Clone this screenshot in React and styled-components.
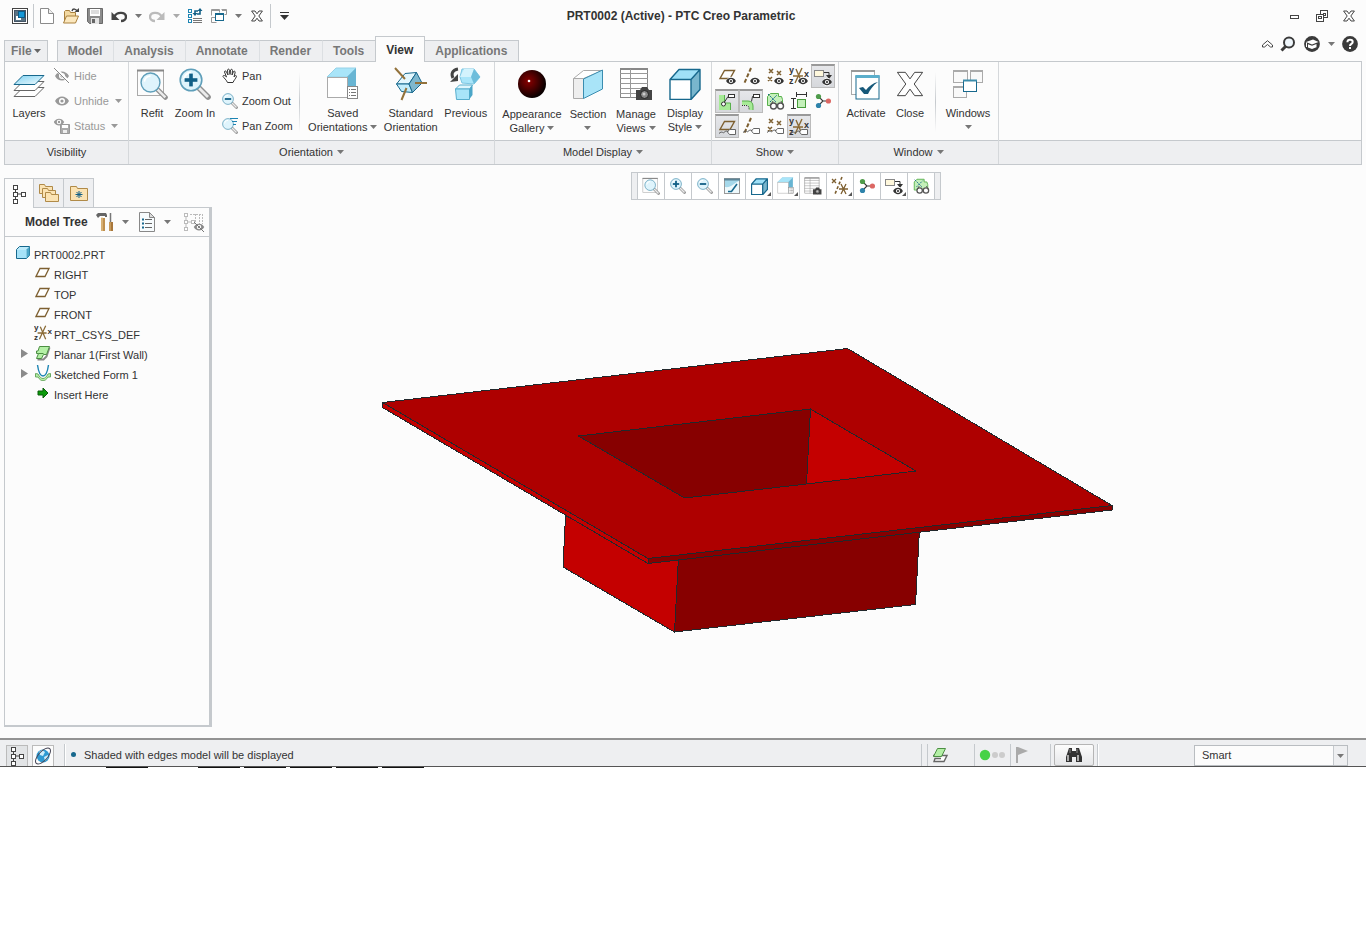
import React from "react";
import styled, { createGlobalStyle, css } from "styled-components";

/* ---------- icons ---------- */

const Svg = ({ w = 16, h, box, children }) => (
  <svg
    width={w}
    height={h || w}
    viewBox={box || `0 0 ${w} ${h || w}`}
    fill="none"
    aria-hidden="true"
  >
    {children}
  </svg>
);

const Caret = ({ color = "#777" }) => (
  <Svg w={7} h={4}>
    <path d="M0 0h7L3.5 4z" fill={color} />
  </Svg>
);

const AppIcon = () => (
  <Svg>
    <rect x=".5" y=".5" width="15" height="15" fill="#fff" stroke="#444" />
    <rect x="2.5" y="2.5" width="11" height="11" fill="#5b7384" stroke="#456" />
    <rect x="4" y="8" width="5" height="4" fill="#fff" />
    <rect x="6.5" y="3.5" width="6" height="6" fill="#1597d6" stroke="#0d5c88" />
  </Svg>
);

const NewIcon = () => (
  <Svg>
    <path d="M1.5.5h8l5 5v10h-13z" fill="#fff" stroke="#8b8b8b" />
    <path d="M9.5.5v5h5" fill="#eee" stroke="#8b8b8b" />
  </Svg>
);

const OpenIcon = () => (
  <Svg>
    <path d="M1.5 14.5v-11l1-1h4l1 2h5v4" fill="#f3d9a2" stroke="#a9803d" />
    <path d="M.5 15l3-7h12l-3 7z" fill="#fbe7bd" stroke="#a9803d" />
    <path d="M9 3c1-3 4-2 5 0" stroke="#444" strokeWidth="1.5" />
    <path d="M11.5 4H16V0z" fill="#444" />
  </Svg>
);

const SaveIcon = () => (
  <Svg>
    <path d="M.5.5h15v15h-13l-2-2z" fill="#8b8b8b" stroke="#696969" />
    <rect x="3" y="1" width="10" height="7" fill="#fff" />
    <path d="M4 3h8M4 5h8" stroke="#bbb" />
    <rect x="4" y="10" width="8" height="6" fill="#e4e4e4" />
    <rect x="5" y="11" width="3" height="4" fill="#666" />
  </Svg>
);

const CurvedArrow = ({ color }) => (
  <>
    <path d="M3 9c3-6 12-5 12 0 0 2-2 4-5 4" stroke={color} strokeWidth="2.4" />
    <path d="M.5 4v8h8z" fill={color} />
  </>
);

const UndoIcon = () => (
  <Svg>
    <CurvedArrow color="#444" />
  </Svg>
);

const RedoIcon = () => (
  <Svg>
    <g transform="matrix(-1 0 0 1 16 0)">
      <CurvedArrow color="#bbb" />
    </g>
  </Svg>
);

const RegenIcon = () => (
  <Svg>
    <rect x="1.5" y="1.5" width="3" height="3" stroke="#1c84b3" />
    <rect x="1.5" y="6.5" width="3" height="3" stroke="#1c84b3" />
    <rect x="1.5" y="11.5" width="3" height="3" stroke="#1c84b3" />
    <path d="M6 10.5h9M6 12.5h9M6 14.5h9" stroke="#777" />
    <path d="M8 6V3h3M13 2v4h-3" stroke="#115f86" strokeWidth="1.6" />
    <path d="M5.5 5h5L8 8zM10.5 3h5L13 0z" fill="#115f86" />
  </Svg>
);

const TilesIcon = () => (
  <Svg>
    <path d="M.5 7.5v-6h8v3M10.5 1.5h5v5h-2M.5 9.5v5h5M.5 9.5h4" stroke="#999" />
    <path d="M1 2h7M11 2h4" stroke="#999" strokeWidth="2" />
    <rect x="4.5" y="5.5" width="8" height="7" fill="#fff" stroke="#17688d" />
    <path d="M4 6h9" stroke="#17688d" strokeWidth="2" />
  </Svg>
);

const CrossIcon = ({ size = 12 }) => (
  <Svg w={size} box="0 0 12 12">
    <path
      d="M.6 1h3.400L6 3.800 8 1h3.400L7.800 6l3.600 5H8L6 8.200 4 11H.6L4.200 6z"
      fill="#fff"
      stroke="#444"
      vectorEffect="non-scaling-stroke"
    />
  </Svg>
);

const MenuCaret = () => (
  <Svg w={9} h={8}>
    <path d="M0 .5h9" stroke="#333" />
    <path d="M0 3h9L4.5 8z" fill="#333" />
  </Svg>
);

const MinimizeIcon = () => (
  <Svg w={10} h={6}>
    <rect x=".5" y="2.5" width="8" height="3" fill="#fff" stroke="#444" />
  </Svg>
);

const RestoreIcon = () => (
  <Svg w={12}>
    <rect x="4.5" y=".5" width="7" height="7" fill="#fff" stroke="#444" />
    <rect x="7.5" y="3.5" width="2" height="2" stroke="#444" />
    <rect x=".5" y="4.5" width="7" height="7" fill="#fff" stroke="#444" />
    <rect x="2.5" y="6.5" width="3" height="2" stroke="#444" />
  </Svg>
);

const CollapseIcon = () => (
  <Svg w={11} h={8}>
    <path
      d="M5.5.7l5 4.300v2h-2l-3-2.500-3 2.500h-2V5z"
      fill="#fff"
      stroke="#444"
    />
  </Svg>
);

const SearchIcon = () => (
  <Svg>
    <circle cx="9" cy="6.5" r="5" fill="#eff6fb" stroke="#3a3a3a" strokeWidth="2" />
    <path d="M6 10l-4.500 4.500" stroke="#3a3a3a" strokeWidth="3" />
  </Svg>
);

const LearnIcon = () => (
  <Svg>
    <circle cx="8" cy="8" r="7.900" fill="#3a3a3a" />
    <path d="M2 6l7-2.500L14.500 6 8 8.500z" fill="#fff" />
    <path d="M4 8.200l4 1.600 4.500-1.800v3.200L8 13l-4-1.600z" fill="#fff" />
    <path d="M2.500 6.500V11" stroke="#fff" />
  </Svg>
);

const HelpIcon = () => (
  <Svg>
    <circle cx="8" cy="8" r="7.900" fill="#3a3a3a" />
    <path
      d="M5.400 6.300c0-3.400 5.300-3.100 5.300-.3C10.700 8 8 7.800 8 10"
      stroke="#fff"
      strokeWidth="2"
    />
    <rect x="7" y="11" width="2" height="2" fill="#fff" />
  </Svg>
);

const LayersIcon = () => (
  <Svg w={32}>
    <defs>
      <linearGradient id="sheet" x1="0" x2="1" y1="0" y2="1">
        <stop offset="0" stopColor="#7fd2f2" />
        <stop offset="1" stopColor="#f2fbfe" />
      </linearGradient>
    </defs>
    <path d="M10 19.500h21l-9 9H1z" fill="#fff" stroke="#666" />
    <path d="M10 13.500h21l-9 9H1z" fill="#fff" stroke="#666" />
    <path d="M10 7.500h21l-9 9H1z" fill="url(#sheet)" stroke="#17688d" />
  </Svg>
);

const Eye = ({ color = "#333" }) => (
  <>
    <path d="M-7 0c3-6 11-6 14 0-3 6-11 6-14 0z" fill={color} />
    <circle r="3" fill="#fff" />
    <circle r="1.600" fill={color} />
  </>
);

const HideIcon = () => (
  <Svg>
    <g transform="translate(8 8)">
      <Eye color="#999" />
    </g>
    <path d="M1 0l15 15" stroke="#fff" strokeWidth="3" />
    <path d="M0 0l15 15" stroke="#888" />
  </Svg>
);

const UnhideIcon = () => (
  <Svg>
    <g transform="translate(8 8)">
      <Eye color="#999" />
    </g>
  </Svg>
);

const StatusIcon = () => (
  <Svg>
    <g transform="translate(5 4) scale(.75)">
      <Eye color="#999" />
    </g>
    <path d="M6.500 6.500h9v9h-9z" fill="#aaa" stroke="#999" />
    <rect x="8" y="7" width="6" height="3" fill="#fff" />
    <rect x="9" y="12" width="4" height="3" fill="#eee" />
  </Svg>
);

// lens and handle on a 16 unit grid, shared by every zoom command
const Lens = ({ sign }) => (
  <>
    <path d="M10 10l4.500 4.500" stroke="#909090" strokeWidth="2.800" strokeLinecap="round" />
    <path d="M10 10l4.500 4.500" stroke="#ececec" strokeWidth="1.400" />
    <circle cx="6" cy="6" r="5.400" fill="#dff4fc" stroke="#5f9fba" strokeWidth=".8" />
    <path d="M2.500 5.500A3.500 3.500 0 0 1 6 2.300" stroke="#fff" />
    {sign && <path d="M2.800 6h6.400" stroke="#115f86" strokeWidth="1.800" />}
    {sign === "+" && <path d="M6 2.800v6.400" stroke="#115f86" strokeWidth="1.800" />}
  </>
);

const RefitIcon = ({ size = 32 }) => (
  <Svg w={size} box="0 0 32 32">
    <rect x="1.500" y="2.500" width="26" height="25" fill="#fcfcfc" stroke="#aaa" />
    <path d="M1 2.500h27" stroke="#888" strokeWidth="2" />
    <g transform="translate(4 4) scale(1.750)">
      <Lens />
    </g>
  </Svg>
);

const ZoomIcon = ({ size = 16, sign }) => (
  <Svg w={size} box="0 0 16 16">
    <Lens sign={sign} />
  </Svg>
);

const PanZoomIcon = () => (
  <Svg>
    <Lens />
    <path d="M8 .5h8M10 3.500h5M11 6.500h3" stroke="#1c84b3" />
  </Svg>
);

const HandIcon = () => (
  <Svg>
    <path
      d="M5.500 14.500C4.500 12 2 10 1 8.500 1 7 2.500 7 4.500 9l-2-5c0-1.500 1.500-1.500 2 0L6 7l-.5-5c.5-1.500 2-1 2 .5l.5 4L8.500 2c.5-1 2-1 2 .5L10 7l1.500-3.500c1-1 2 0 1.500 1.500l-1 4c1-1.500 2.500-2 2.500-.5C13.500 11 12 12 11 14.500z"
      fill="#fff"
      stroke="#333"
    />
  </Svg>
);

const ListPage = ({ x, y }) => (
  <g transform={`translate(${x} ${y})`}>
    <rect x=".5" y=".5" width="10" height="12" fill="#fff" stroke="#888" />
    <path d="M2 3.500h1M2 6.500h1M2 9.500h1M4 3.500h5M4 6.500h5M4 9.500h5" stroke="#777" />
  </g>
);

const SavedViewIcon = ({ size = 34 }) => (
  <Svg w={size} box="0 0 34 34">
    <path d="M1 10l9-9h20l-9 9z" fill="#a9e5f9" stroke="#96d2e8" />
    <path d="M21 10l9-9v20l-9 9z" fill="#68b5d3" />
    <rect x="1.500" y="10.500" width="20" height="20" fill="#fff" stroke="#aaa" />
    <ListPage x={21} y={19} />
  </Svg>
);

const StandardViewIcon = () => (
  <Svg w={34}>
    <g stroke="#17688d" strokeLinejoin="round">
      <path d="M11 6.500l11.500-1L15 17H2.500z" fill="#e4f7fd" />
      <path d="M2.500 17H15l3.500 8.500-11-1z" fill="#c2edfb" />
      <path d="M22.500 5.500L28 16l-9.500 9.500L15 17z" fill="#7fb8ce" />
    </g>
    <path d="M1 1l10 11M21 16h12M12.500 21l-5 12" stroke="#93723b" strokeWidth="2" />
  </Svg>
);

const PreviousIcon = () => (
  <Svg w={34}>
    <path d="M13 2h12l6 8-6 7-12-1-2-6z" fill="#a9e5f9" stroke="#7cc6e2" />
    <path d="M15 2h10l-3 8H11z" fill="#d3f3fd" />
    <path d="M25 2l6 8-6 7-3-7z" fill="#6dbddb" />
    <path d="M6.500 22l4-4h13l-3 4z" fill="#dff6fd" stroke="#58aecd" />
    <path d="M6.500 22h14v10.500h-13z" fill="#a9e5f9" stroke="#58aecd" />
    <path d="M20.500 22l3-4v10l-3 4z" fill="#4ba6c8" />
    <path d="M9 2C3 3 2 7 4 11" stroke="#444" strokeWidth="3" />
    <path d="M1 15l8-1V7z" fill="#444" />
  </Svg>
);

const SphereIcon = () => (
  <Svg w={30}>
    <defs>
      <radialGradient id="sphere" cx="38%" cy="40%" r="60%">
        <stop offset="0" stopColor="#8a0000" />
        <stop offset=".45" stopColor="#520000" />
        <stop offset="1" stopColor="#0a0000" />
      </radialGradient>
    </defs>
    <circle cx="15" cy="15" r="14" fill="url(#sphere)" />
    <circle cx="12" cy="12" r="1.300" fill="#fff" />
  </Svg>
);

const SectionIcon = () => (
  <Svg w={32}>
    <path d="M1.500 10.500l10-8h19l-19 8z" fill="#fff" stroke="#aaa" />
    <path d="M1.500 10.500h10v20h-10z" fill="#eee" stroke="#aaa" />
    <path d="M11.500 11l19-9v19l-19 9.500z" fill="#a9e4f8" stroke="#3a8db0" />
  </Svg>
);

const Camera = ({ x, y }) => (
  <g transform={`translate(${x} ${y})`}>
    <path d="M0 3h4l2-3h5l2 3h3v10H0z" fill="#444" />
    <circle cx="8.500" cy="7.500" r="4" fill="#888" stroke="#222" />
    <circle cx="8" cy="7" r="1.500" fill="#ccc" />
  </g>
);

const ManageViewsIcon = ({ size = 34 }) => (
  <Svg w={size} box="0 0 34 34">
    <rect x="1.500" y="1.500" width="27" height="29" fill="#fff" stroke="#888" />
    <path d="M1 2h28" stroke="#888" strokeWidth="2" />
    <path
      d="M1 6.500h28M1 11.500h28M1 16.500h28M1 21.500h28M1 26.500h28M11.500 2v29"
      stroke="#999"
    />
    <Camera x={17} y={20} />
  </Svg>
);

const CubeIcon = ({ size = 32 }) => (
  <Svg w={size} box="0 0 32 32">
    <path d="M1 11.500l9-10h21l-9 10z" fill="#9fe0f7" />
    <path d="M22 11.500l9-10v20l-9 10z" fill="#79b6cd" />
    <path d="M1 11.500h21v20H1z" fill="#fff" />
    <path
      d="M1 11.500l9-10h21v20l-9 10H1zM1 11.500h21v20M22 11.500l9-10"
      stroke="#17688d"
      strokeWidth={size < 20 ? 2.400 : 1.400}
      strokeLinejoin="round"
    />
  </Svg>
);

const ActivateIcon = () => (
  <Svg w={32}>
    <rect x="1.500" y="2.500" width="23" height="24" fill="#fff" stroke="#aaa" />
    <path d="M1 3h24" stroke="#999" strokeWidth="2" />
    <rect x="6" y="8" width="23" height="23" fill="#fff" stroke="#17688d" />
    <path d="M5.500 8.500h24" stroke="#5baecb" strokeWidth="3" />
    <path d="M9 20l4-1 3 3c3-4 7-7 12-8-5 3-8 8-10 12h-4z" fill="#17597a" />
  </Svg>
);

const WindowsIcon = () => (
  <Svg w={32}>
    <g fill="#f9f9f9" stroke="#aaa">
      <rect x="1.500" y="2.500" width="14" height="12" />
      <rect x="18.500" y="2.500" width="12" height="12" />
      <rect x="1.500" y="18.500" width="13" height="11" />
    </g>
    <path d="M1 3h15M18 3h13M1 19h14" stroke="#aaa" strokeWidth="2" />
    <rect x="11.500" y="12.500" width="13" height="11" fill="#fff" stroke="#17688d" />
    <path d="M11 12.500h14" stroke="#3c8cab" strokeWidth="2" />
  </Svg>
);

const CsysMark = () => (
  <>
    <path d="M4 10h10M7 3l6 14M13 2L6 17" stroke="#8a6a35" strokeWidth="1.400" />
    <AxisText x="0" y="7">y</AxisText>
    <AxisText x="15" y="11">x</AxisText>
    <AxisText x="0" y="18">z</AxisText>
  </>
);

const datumShapes = {
  plane: <path d="M7.500 4.500h10L13 12.500H3z" stroke="#7d5f30" strokeWidth="1.400" />,
  axis: <path d="M10 2L3 18" stroke="#7d5f30" strokeWidth="2" strokeDasharray="4 2" />,
  point: (
    <path
      d="M4 3l4 4m0-4L4 7M12 5l4 4m0-4l-4 4M3 11l4 4m0-4l-4 4"
      stroke="#7d5f30"
      strokeWidth="1.500"
    />
  ),
  csys: <CsysMark />,
  note: (
    <>
      <rect x="1.500" y="3.500" width="9" height="6" fill="#fff8dc" stroke="#888" />
      <path d="M11 5.500h5v3" stroke="#333" />
      <path d="M13 8h6l-3 4z" fill="#333" />
    </>
  ),
};

const DatumIcon = ({ shape, mark, size = 20 }) => (
  <Svg w={size} box="0 0 20 20">
    {datumShapes[shape]}
    {mark === "eye" && (
      <g transform="translate(14 15) scale(.7)">
        <circle r="6" fill="#fcfcfc" />
        <Eye />
      </g>
    )}
    {mark === "tag" && (
      <>
        <path d="M10.500 15l2-2.500h6v5h-6z" fill="#fff" stroke="#666" />
        <path d="M2 16.500c3-3 4 0 5-1s2-2 4-1" stroke="#555" />
      </>
    )}
  </Svg>
);

const WallNoteIcon = () => (
  <Svg w={20}>
    <path d="M2 3h5v8h7v7H2z" fill="#a6ea96" />
    <path d="M7.500 3v8h6v7" stroke="#58b04c" />
    <path d="M7.500 10L11 4.500h1" stroke="#333" />
    <circle cx="6.500" cy="12" r="2" fill="#fff" stroke="#333" />
    <rect x="11.500" y="2.500" width="6" height="3" fill="#fff" stroke="#333" />
  </Svg>
);

const BendNoteIcon = () => (
  <Svg w={20}>
    <path d="M1 9h6c3 0 5 2 5 5v4H8v-2c0-2-1-3-3-3H1z" fill="#a6ea96" />
    <path d="M1 9h6c3 0 5 2 5 5v4" stroke="#58b04c" />
    <path d="M1 13.500h4c2 0 3 1 3 3V18" stroke="#333" strokeDasharray="1 1" />
    <path d="M10.500 9.500l1-5h1" stroke="#333" />
    <rect x="12.500" y="2.500" width="6" height="3" fill="#fff" stroke="#333" />
  </Svg>
);

const GlassesIcon = ({ size = 20 }) => (
  <Svg w={size} box="0 0 20 20">
    <path d="M2.500 5.500l3-3h8v3h3l1 3v6h-15z" fill="#c4f0ba" stroke="#58b04c" />
    <path d="M3 3l8 8M5 11l7-7" stroke="#17688d" strokeDasharray="2 1" />
    <circle cx="8.500" cy="15" r="3" fill="#fff" stroke="#555" strokeWidth="1.400" />
    <circle cx="15.500" cy="15" r="3" fill="#fff" stroke="#555" strokeWidth="1.400" />
    <path d="M6 14l2-4M18 14l-2-4" stroke="#555" />
  </Svg>
);

const DimensionIcon = () => (
  <Svg w={20}>
    <rect x="8.500" y="8.500" width="8" height="8" fill="#c4f0ba" stroke="#489c3c" />
    <path
      d="M8 3.500h9M7.500 1v5M17.500 1v5M4.500 8v9M2 7.500h5M2 17.500h5"
      stroke="#333"
    />
  </Svg>
);

const NetworkIcon = () => (
  <Svg w={18} box="0 0 20 20">
    <path d="M5 5l5 5-5 5M10 10h6" stroke="#333" strokeWidth="1.200" />
    <circle cx="5" cy="5" r="2.900" fill="#4f9c4b" />
    <circle cx="5" cy="15" r="2.900" fill="#2d83ab" />
    <circle cx="16" cy="10" r="2.900" fill="#dc6763" />
  </Svg>
);

const RepaintIcon = () => (
  <Svg>
    <rect x=".5" y=".5" width="15" height="15" fill="#a5d8ea" stroke="#999" />
    <path d="M1 15V9c6 1 9-4 14-6v12z" fill="#eef9fc" />
    <path d="M0 1.500h16" stroke="#5c8496" strokeWidth="2" />
    <path d="M4 13.500h3.500L13 6" stroke="#17688d" strokeWidth="1.600" />
  </Svg>
);

const DatumFilterIcon = () => (
  <Svg w={20}>
    <path d="M2 3l4 4m0-4L2 7" stroke="#7d5f30" strokeWidth="1.300" />
    <path d="M12 1L5 18" stroke="#7d5f30" strokeWidth="1.600" strokeDasharray="3 2" />
    <path d="M9 13h9M11 8l5 10M16 8l-5 10" stroke="#7d5f30" strokeWidth="1.300" />
  </Svg>
);

const TreeIcon = () => (
  <Svg w={16} h={20}>
    <path d="M4.500 5v3M4.500 12v3M7 10h4" stroke="#444" />
    <g fill="#fff" stroke="#444">
      <rect x="2.500" y="1.500" width="4" height="4" />
      <rect x="2.500" y="8.500" width="4" height="4" />
      <rect x="2.500" y="15.500" width="4" height="4" />
      <rect x="10.500" y="8.500" width="4" height="4" />
    </g>
  </Svg>
);

const FoldersIcon = () => (
  <Svg w={20}>
    <g fill="#fbe3b3" stroke="#b08a48">
      <path d="M.5 10.500v-9h5l1 2h7v7z" />
      <path d="M3.500 14.500v-9h5l1 2h7v7z" />
      <path d="M6.500 18.500v-9h5l1 2h7v7z" />
    </g>
  </Svg>
);

const FavoritesIcon = () => (
  <Svg w={18} h={16}>
    <path d="M.5 15.500v-14h6l1 2h10v12z" fill="#fbe3b3" stroke="#b08a48" />
    <path d="M9 6v7M5.500 9.500h7M6.500 7l5 5M11.500 7l-5 5" stroke="#115f86" />
  </Svg>
);

const ToolsIcon = () => (
  <Svg w={18} h={20}>
    <path d="M0 3l2-2h8l1 2v2H9V4H4L2 6z" fill="#666" />
    <path d="M5 6h4v13H5z" fill="#c0904e" />
    <path d="M6 5v14" stroke="#edd09c" />
    <path d="M14.500 1v9" stroke="#777" strokeWidth="1.500" />
    <path d="M13 10h4v9h-4z" fill="#a8773b" />
    <path d="M14 10v9" stroke="#e4bd7c" />
  </Svg>
);

const TreeSettingsIcon = () => (
  <Svg w={16} h={20}>
    <path d="M.5.5h10l5 5v14H.5z" fill="#f7fbfd" stroke="#888" />
    <path d="M10.500.5v5h5z" fill="#ddd" stroke="#888" />
    <path d="M6 7.500h7M6 11.500h7M6 15.500h7" stroke="#666" />
    <path d="M3 7.500h2M3 11.500h2M3 15.500h2" stroke="#17688d" strokeWidth="2" />
  </Svg>
);

const TreeFilterIcon = () => (
  <Svg w={22} h={20}>
    <path d="M3 5v3M3 12v3M5 10h3" stroke="#bbb" />
    <path d="M7 2.500h12M12.500 2v10M16.500 2v10M19.500 2v10" stroke="#bbb" strokeDasharray="2 1" />
    <g fill="#fff" stroke="#bbb">
      <rect x="1.500" y="1.500" width="3" height="3" />
      <rect x="1.500" y="8.500" width="3" height="3" />
      <rect x="1.500" y="15.500" width="3" height="3" />
      <rect x="8.500" y="8.500" width="3" height="3" />
    </g>
    <g transform="translate(16 15) scale(.75)">
      <Eye color="#888" />
    </g>
    <path d="M11 10l10 10" stroke="#777" />
  </Svg>
);

const PartIcon = () => (
  <Svg w={14}>
    <path d="M.5 3.500l3-3h10v9l-3 3H.5z" fill="#bdebfb" stroke="#17688d" />
    <path d="M10.500 3.500l3-3v9l-3 3z" fill="#4ba6c8" />
    <rect x="1" y="4" width="9" height="8" fill="#a5e2f8" />
  </Svg>
);

const PlaneIcon = () => (
  <Svg w={16} h={12}>
    <path d="M5 1.500h9l-4 8H1z" fill="#fff" stroke="#7d5f30" strokeWidth="1.300" />
  </Svg>
);

const CsysIcon = () => (
  <Svg w={18} box="0 0 20 20">
    <CsysMark />
  </Svg>
);

const WallIcon = () => (
  <Svg>
    <path d="M14.500 2.500l-3 9-3 3h-6" stroke="#888" strokeWidth="2" />
    <path d="M4.500 1.500h10l-3 8h-3l-2 4h-5l2-5h-2V6h1.500z" fill="#b4f0a6" stroke="#4c8f43" />
    <path d="M3.500 8.500h5" stroke="#4c8f43" />
  </Svg>
);

const SheetsIcon = () => (
  <Svg w={18} h={16}>
    <path d="M2 8.500h14l-3 6H3l1-3h6" fill="#fff" stroke="#666" strokeWidth="1.400" />
    <path d="M6.500 1.500h8l-4 8h-8z" fill="#b4f0a6" stroke="#4c8f43" />
  </Svg>
);

const FormIcon = () => (
  <Svg>
    <path
      d="M.5 8.500L3 9c3 6 7 6 10 0l2.500-.5V12L13 12c-3 5-7 5-10 0H.5z"
      fill="#b4f0a6"
      stroke="#6aa862"
    />
    <path d="M2.500 0c1 7 3 11 5.500 11S12.500 7 13.500 0" stroke="#1c84b3" strokeWidth="1.400" />
  </Svg>
);

const InsertIcon = () => (
  <Svg w={12}>
    <path d="M1 4h5V1l5 5-5 5V8H1z" fill="#0b9a0b" stroke="#0a5c0a" />
  </Svg>
);

const GlobeIcon = () => (
  <Svg w={20}>
    <circle cx="10" cy="10" r="6.500" fill="#2e9ad2" />
    <path d="M6 6l3-2 3 2-2 4-3-1zM11 11l4-2v3l-3 3z" fill="#cdeefc" />
    <ellipse cx="10" cy="10" rx="10" ry="4.500" transform="rotate(-48 10 10)" stroke="#445" />
  </Svg>
);

const LightsIcon = () => (
  <Svg w={28} h={12}>
    <circle cx="7" cy="6" r="5.200" fill="#46d246" />
    <circle cx="17" cy="6" r="3" fill="#ccc" />
    <circle cx="24" cy="6" r="3" fill="#ccc" />
  </Svg>
);

const FlagIcon = () => (
  <Svg w={14} h={16}>
    <path d="M3 0v16" stroke="#aaa" strokeWidth="2" />
    <path d="M4 0l10 4L4 8z" fill="#aaa" />
  </Svg>
);

const BinocularsIcon = () => (
  <Svg w={18} h={16}>
    <path d="M4 1h3v3h4V1h3l3 9v5h-6v-5H7v5H1v-5z" fill="#333" />
    <path d="M3 8v6M13 8v6" stroke="#aaa" strokeWidth="2" />
    <path d="M5 2v4M12 2v4" stroke="#888" />
  </Svg>
);

/* ---------- data ---------- */

const tabs = ["Model", "Analysis", "Annotate", "Render", "Tools", "View", "Applications"];

const showCommands = [
  { name: "Plane Display", icon: <DatumIcon shape="plane" mark="eye" /> },
  { name: "Axis Display", icon: <DatumIcon shape="axis" mark="eye" /> },
  { name: "Point Display", icon: <DatumIcon shape="point" mark="eye" /> },
  { name: "Csys Display", icon: <DatumIcon shape="csys" mark="eye" /> },
  { name: "Annotation Display", icon: <DatumIcon shape="note" mark="eye" />, on: true },
  { name: "Wall Notes", icon: <WallNoteIcon />, on: true },
  { name: "Bend Notes", icon: <BendNoteIcon />, on: true },
  { name: "Simplified Bends", icon: <GlassesIcon /> },
  { name: "Dimensions", icon: <DimensionIcon /> },
  { name: "Spin Center", icon: <NetworkIcon /> },
  { name: "Plane Tags", icon: <DatumIcon shape="plane" mark="tag" />, on: true },
  { name: "Axis Tags", icon: <DatumIcon shape="axis" mark="tag" /> },
  { name: "Point Tags", icon: <DatumIcon shape="point" mark="tag" /> },
  { name: "Csys Tags", icon: <DatumIcon shape="csys" mark="tag" />, on: true },
];

const viewTools = [
  { name: "Refit", icon: <RefitIcon size={18} /> },
  { name: "Zoom In", icon: <ZoomIcon sign="+" /> },
  { name: "Zoom Out", icon: <ZoomIcon sign="-" /> },
  { name: "Repaint", icon: <RepaintIcon /> },
  { name: "Display Style", icon: <CubeIcon size={17} />, menu: true },
  { name: "Saved Orientations", icon: <SavedViewIcon size={18} />, menu: true },
  { name: "View Manager", icon: <ManageViewsIcon size={18} /> },
  { name: "Datum Display Filters", icon: <DatumFilterIcon />, menu: true },
  { name: "Spin Center", icon: <NetworkIcon /> },
  { name: "Annotation Filters", icon: <DatumIcon shape="note" mark="eye" />, menu: true },
  { name: "Simplified Bends", icon: <GlassesIcon size={18} /> },
];

const treeItems = [
  { label: "RIGHT", icon: <PlaneIcon /> },
  { label: "TOP", icon: <PlaneIcon /> },
  { label: "FRONT", icon: <PlaneIcon /> },
  { label: "PRT_CSYS_DEF", icon: <CsysIcon /> },
  { label: "Planar 1(First Wall)", icon: <WallIcon />, expandable: true },
  { label: "Sketched Form 1", icon: <FormIcon />, expandable: true },
  { label: "Insert Here", icon: <InsertIcon /> },
];

/* ---------- parts ---------- */

const IconCommand = ({ name, width, children }) => (
  <IconButton type="button" aria-label={name} $width={width}>
    {children}
  </IconButton>
);

const BigCommand = ({ width, icon, lines, menu, low }) => (
  <BigButton type="button" $width={width}>
    <BigIcon>{icon}</BigIcon>
    <BigLabel $low={low}>
      {lines.map((line, i) => (
        <span key={line}>
          {line}
          {menu && lines.length > 1 && i === lines.length - 1 && <Caret />}
        </span>
      ))}
      {menu && lines.length === 1 && <span><Caret /></span>}
    </BigLabel>
  </BigButton>
);

const SmallCommand = ({ icon, label, menu, muted }) => (
  <SmallButton type="button" disabled={muted}>
    <SmallIcon>{icon}</SmallIcon>
    <span>{label}</span>
    {menu && <Caret color={muted ? "#999" : undefined} />}
  </SmallButton>
);

const Group = ({ title, width, menu, children }) => (
  <GroupBox $width={width}>
    <GroupBody>{children}</GroupBody>
    <GroupTitle>
      {title}
      {menu && <Caret />}
    </GroupTitle>
  </GroupBox>
);

const TitleBar = () => (
  <TitleRow>
    <QuickAccess>
      <IconCommand name="Creo"><AppIcon /></IconCommand>
      <BarLine />
      <IconCommand name="New"><NewIcon /></IconCommand>
      <IconCommand name="Open"><OpenIcon /></IconCommand>
      <IconCommand name="Save"><SaveIcon /></IconCommand>
      <IconCommand name="Undo"><UndoIcon /></IconCommand>
      <IconCommand name="Undo list" width={14}><Caret /></IconCommand>
      <IconCommand name="Redo"><RedoIcon /></IconCommand>
      <IconCommand name="Redo list" width={14}><Caret color="#aaa" /></IconCommand>
      <IconCommand name="Regenerate"><RegenIcon /></IconCommand>
      <IconCommand name="Windows"><TilesIcon /></IconCommand>
      <IconCommand name="Windows list" width={14}><Caret /></IconCommand>
      <IconCommand name="Close window"><CrossIcon /></IconCommand>
      <BarLine />
      <IconCommand name="Customize toolbar"><MenuCaret /></IconCommand>
    </QuickAccess>
    <Title>PRT0002 (Active) - PTC Creo Parametric</Title>
    <WindowControls>
      <IconCommand name="Minimize" width={27}><MinimizeIcon /></IconCommand>
      <IconCommand name="Restore" width={27}><RestoreIcon /></IconCommand>
      <IconCommand name="Exit" width={27}><CrossIcon /></IconCommand>
    </WindowControls>
  </TitleRow>
);

const TabBar = () => (
  <TabRow>
    <FileTab type="button">
      File <Caret color="#666" />
    </FileTab>
    {tabs.map((tab) => (
      <Tab key={tab} type="button" $active={tab === "View"}>
        {tab}
      </Tab>
    ))}
    <TabTools>
      <IconCommand name="Minimize ribbon" width={18}><CollapseIcon /></IconCommand>
      <IconCommand name="Search"><SearchIcon /></IconCommand>
      <IconCommand name="Learning"><LearnIcon /></IconCommand>
      <IconCommand name="Learning list" width={14}><Caret /></IconCommand>
      <IconCommand name="Help"><HelpIcon /></IconCommand>
    </TabTools>
  </TabRow>
);

const Ribbon = () => (
  <RibbonBox>
    <Group title="Visibility" width={123}>
      <BigCommand width={48} icon={<LayersIcon />} lines={["Layers"]} />
      <Stack>
        <SmallCommand icon={<HideIcon />} label="Hide" muted />
        <SmallCommand icon={<UnhideIcon />} label="Unhide" menu muted />
        <SmallCommand icon={<StatusIcon />} label="Status" menu muted />
      </Stack>
    </Group>
    <Group title="Orientation" width={366} menu>
      <BigCommand width={46} icon={<RefitIcon />} lines={["Refit"]} />
      <BigCommand width={40} icon={<ZoomIcon size={32} sign="+" />} lines={["Zoom In"]} />
      <Stack $inset>
        <SmallCommand icon={<HandIcon />} label="Pan" />
        <SmallCommand icon={<ZoomIcon sign="-" />} label="Zoom Out" />
        <SmallCommand icon={<PanZoomIcon />} label="Pan Zoom" />
      </Stack>
      <Divider />
      <BigCommand
        width={74}
        icon={<SavedViewIcon />}
        lines={["Saved", "Orientations"]}
        menu
      />
      <BigCommand width={62} icon={<StandardViewIcon />} lines={["Standard", "Orientation"]} />
      <BigCommand width={48} icon={<PreviousIcon />} lines={["Previous"]} />
    </Group>
    <Group title="Model Display" width={217} menu>
      <BigCommand width={74} icon={<SphereIcon />} lines={["Appearance", "Gallery"]} menu low />
      <BigCommand width={38} icon={<SectionIcon />} lines={["Section"]} menu low />
      <BigCommand width={58} icon={<ManageViewsIcon />} lines={["Manage", "Views"]} menu low />
      <BigCommand width={40} icon={<CubeIcon />} lines={["Display", "Style"]} menu />
    </Group>
    <Group title="Show" width={127} menu>
      <ShowGrid>
        {showCommands.map((el) => (
          <Toggle key={el.name} type="button" aria-label={el.name} $on={el.on}>
            {el.icon}
          </Toggle>
        ))}
      </ShowGrid>
    </Group>
    <Group title="Window" width={160} menu>
      <BigCommand width={54} icon={<ActivateIcon />} lines={["Activate"]} />
      <BigCommand width={34} icon={<CrossIcon size={28} />} lines={["Close"]} />
      <Divider $wide />
      <BigCommand width={48} icon={<WindowsIcon />} lines={["Windows"]} menu />
    </Group>
    <Group />
  </RibbonBox>
);

const ModelTree = () => (
  <Sidebar>
    <SideTabs>
      <SideTab type="button" aria-label="Model Tree tab" $active><TreeIcon /></SideTab>
      <SideTab type="button" aria-label="Folder Browser"><FoldersIcon /></SideTab>
      <SideTab type="button" aria-label="Favorites"><FavoritesIcon /></SideTab>
    </SideTabs>
    <Panel>
      <PanelHeader>
        <h2>Model Tree</h2>
        <IconCommand name="Tree tools"><ToolsIcon /></IconCommand>
        <IconCommand name="Tree tools list" width={18}><Caret /></IconCommand>
        <IconCommand name="Tree settings"><TreeSettingsIcon /></IconCommand>
        <IconCommand name="Tree settings list" width={18}><Caret /></IconCommand>
        <TreeFilterSlot type="button" aria-label="Tree filter" disabled>
          <TreeFilterIcon />
        </TreeFilterSlot>
      </PanelHeader>
      <TreeList>
        <TreeRow>
          <TreeGlyph>
            <PartIcon />
          </TreeGlyph>
          PRT0002.PRT
        </TreeRow>
        {treeItems.map((el) => (
          <TreeRow key={el.label}>
            <Arrow>
              {el.expandable && (
                <Svg w={7} h={9}>
                  <path d="M0 0l7 4.500L0 9z" fill="#8b8b8b" />
                </Svg>
              )}
            </Arrow>
            <TreeGlyph>{el.icon}</TreeGlyph>
            {el.label}
          </TreeRow>
        ))}
      </TreeList>
    </Panel>
  </Sidebar>
);

const Part = () => (
  <PartDrawing viewBox="212 200 1154 538" role="img" aria-label="PRT0002">
    <g stroke="#22282c" strokeWidth="1" strokeLinejoin="round" shapeRendering="crispEdges">
      {/* punched body under the wall */}
      <path d="M565.500 516l-2.500 51 111.500 65 4-75z" fill="#c40000" />
      <path d="M678.500 557l241-28-4 75.500-241 27.500z" fill="#870000" />
      {/* wall thickness */}
      <path d="M382.500 402.500v5l265.500 156v-5z" fill="#c40000" />
      <path d="M648 558.500v5l464-53.500v-4.500z" fill="#870000" />
      {/* top face and opening */}
      <path d="M382.500 402.500l465-54 264.500 157-464 53z" fill="#ae0000" />
      <path d="M578.500 436l232-27-4 75-122 14z" fill="#870000" />
      <path d="M810.500 409l105.500 62-109.500 13z" fill="#c40000" />
    </g>
  </PartDrawing>
);

const ViewToolbar = () => (
  <ToolStrip>
    <Grip />
    {viewTools.map((el) => (
      <ToolCell key={el.name} type="button" aria-label={el.name}>
        {el.icon}
        {el.menu && <Corner />}
      </ToolCell>
    ))}
    <Grip $end />
  </ToolStrip>
);

const StatusBar = () => (
  <>
    <StatusRow>
      <StatusToggle type="button" aria-label="Toggle tree" $on><TreeIcon /></StatusToggle>
      <StatusToggle type="button" aria-label="Toggle browser"><GlobeIcon /></StatusToggle>
      <StatusLine />
      <Message>Shaded with edges model will be displayed</Message>
      <StatusRight>
        <StatusCell $width={6} />
        <StatusCell $width={47}><SheetsIcon /></StatusCell>
        <StatusCell $width={36}><LightsIcon /></StatusCell>
        <StatusCell $width={40}><FlagIcon /></StatusCell>
        <StatusCell $width={47}>
          <FindButton type="button" aria-label="Find"><BinocularsIcon /></FindButton>
        </StatusCell>
        <StatusLine />
        <FilterBox>
          <select aria-label="Selection filter" defaultValue="Smart">
            <option>Smart</option>
          </select>
          <FilterArrow><Caret /></FilterArrow>
        </FilterBox>
      </StatusRight>
    </StatusRow>
    <Edge>
      <EdgeGap />
      <EdgeMark /><EdgeSpace />
      <EdgeMark /><EdgeMark /><EdgeMark /><EdgeMark /><EdgeMark />
    </Edge>
  </>
);

const App = () => {
  return (
    <>
      <GlobalStyle />
      <Shell>
        <TitleBar />
        <TabBar />
        <Ribbon />
        <Workspace>
          <ModelTree />
          <Viewport>
            <ViewToolbar />
            <Part />
          </Viewport>
        </Workspace>
        <StatusBar />
      </Shell>
    </>
  );
};

/* ---------- styles ---------- */

const line = "#c5c9cd";
const tint = "#eeeff1";

const GlobalStyle = createGlobalStyle`
  * {
    box-sizing: border-box;
  }
  body {
    margin: 0;
    background: #fff;
    color: #333;
    font: 11px/14px "Liberation Sans", Arial, sans-serif;
  }
  button, select {
    font: inherit;
    color: inherit;
    margin: 0;
    padding: 0;
    border: 0;
    background: none;
  }
  h1, h2, p, ul {
    margin: 0;
    padding: 0;
    list-style: none;
  }
  svg {
    display: block;
    flex: none;
  }
`;

const AxisText = styled.text`
  font: bold 9px "Liberation Sans", Arial, sans-serif;
  fill: #333;
`;

const Shell = styled.div`
  background: #fcfcfc;
`;

const center = css`
  display: flex;
  align-items: center;
  justify-content: center;
`;

const IconButton = styled.button`
  ${center}
  flex: none;
  width: ${(props) => props.$width || 24}px;
  height: 24px;
`;

const TitleRow = styled.header`
  display: grid;
  grid-template-columns: 1fr auto 1fr;
  align-items: center;
  height: 32px;
  padding-right: 4px;
`;

const QuickAccess = styled.div`
  display: flex;
  align-items: center;
  padding-left: 8px;
`;

const BarLine = styled.span`
  width: 1px;
  height: 24px;
  margin: 0 1px;
  background: ${line};
`;

const Title = styled.h1`
  font-size: 12px;
  line-height: 16px;
`;

const WindowControls = styled.div`
  display: flex;
  justify-content: flex-end;
`;

const TabRow = styled.nav`
  display: flex;
  align-items: flex-end;
  height: 29px;
  padding: 0 4px;
`;

const Tab = styled.button`
  position: relative;
  height: ${(props) => (props.$active ? 26 : 21)}px;
  padding: 0 11px 0 10px;
  border: 1px solid ${line};
  border-left-color: ${(props) => (props.$active ? line : "#dcdfe2")};
  border-right-width: ${(props) => (props.$active ? 1 : 0)}px;
  border-bottom-width: 0;
  background: ${(props) => (props.$active ? "#fcfcfc" : tint)};
  color: ${(props) => (props.$active ? "#333" : "#777")};
  font-size: 12px;
  font-weight: bold;
  margin-bottom: ${(props) => (props.$active ? -1 : 0)}px;
  &:last-of-type {
    border-left-width: 0;
    border-right-width: 1px;
  }
`;

const FileTab = styled(Tab)`
  display: flex;
  align-items: center;
  gap: 2px;
  padding: 0 6px;
  margin-right: 9px;
  border-left-color: ${line};
  border-right-width: 1px;
  & + button {
    border-left-color: ${line};
  }
`;

const TabTools = styled.div`
  display: flex;
  align-self: flex-start;
  margin-left: auto;
`;

const RibbonBox = styled.section`
  display: flex;
  height: 104px;
  margin: 0 4px;
  border: 1px solid ${line};
`;

const GroupBox = styled.div`
  display: flex;
  flex-direction: column;
  flex: ${(props) => (props.$width ? `0 0 ${props.$width}px` : "1")};
  & + & {
    border-left: 1px solid #d5d8db;
  }
`;

const GroupBody = styled.div`
  display: flex;
  height: 78px;
  padding-top: 2px;
`;

const GroupTitle = styled.div`
  ${center}
  gap: 4px;
  flex: 1;
  padding-bottom: 2px;
  border-top: 1px solid ${line};
  background: ${tint};
`;

const BigButton = styled.button`
  display: flex;
  flex-direction: column;
  align-items: center;
  flex: none;
  width: ${(props) => props.$width}px;
`;

const BigIcon = styled.span`
  ${center}
  height: 40px;
`;

const BigLabel = styled.span`
  padding-top: ${(props) => (props.$low ? 3 : 2)}px;
  white-space: nowrap;
  span {
    ${center}
    gap: 3px;
    height: 14px;
  }
`;

const Stack = styled.div`
  display: flex;
  flex-direction: column;
  padding-left: ${(props) => (props.$inset ? 6 : 0)}px;
`;

const SmallButton = styled.button`
  display: flex;
  align-items: center;
  gap: 4px;
  height: 25px;
  padding-bottom: 2px;
  white-space: nowrap;
  &:disabled {
    color: #999;
  }
  span + svg {
    margin-left: 2px;
  }
`;

const SmallIcon = styled.span`
  ${center}
  width: 17px;
`;

const Divider = styled.span`
  width: 1px;
  margin: 8px ${(props) => (props.$wide ? 8 : 6)}px;
  background: linear-gradient(transparent, ${line}, transparent);
`;

const ShowGrid = styled.div`
  display: grid;
  grid-template-columns: repeat(5, 24px);
  grid-auto-rows: 25px;
  padding-left: 3px;
`;

const Toggle = styled.button`
  ${center}
  width: 24px;
  height: 24px;
  border: 1px solid transparent;
  ${(props) =>
    props.$on &&
    css`
      border-color: #bbb;
      border-top: 2px solid #999;
      background: linear-gradient(#e6e7ea, #d6d8dc);
    `}
`;

const Workspace = styled.main`
  display: flex;
  padding-bottom: 11px;
`;

const Sidebar = styled.aside`
  flex: none;
  width: 208px;
  margin: 13px 0 0 4px;
`;

const SideTabs = styled.div`
  display: flex;
  height: 29px;
`;

const SideTab = styled.button`
  ${center}
  position: relative;
  width: 30px;
  height: ${(props) => (props.$active ? 30 : 29)}px;
  border: 1px solid ${line};
  border-bottom-width: 0;
  background: ${(props) => (props.$active ? "#fcfcfc" : tint)};
  & + & {
    border-left-width: 0;
  }
`;

const Panel = styled.div`
  height: 520px;
  border: 1px solid ${line};
  border-right-width: 3px;
  border-bottom-width: 2px;
`;

const PanelHeader = styled.div`
  display: flex;
  align-items: center;
  height: 29px;
  padding: 0 3px 0 20px;
  border-bottom: 1px solid ${line};
  h2 {
    margin-right: 5px;
    font-size: 12px;
    white-space: nowrap;
  }
`;

const TreeFilterSlot = styled(IconButton)`
  margin-left: auto;
`;

const TreeList = styled.ul`
  padding: 8px 0 0 9px;
`;

const TreeRow = styled.li`
  display: flex;
  align-items: center;
  height: 20px;
`;

const Arrow = styled.span`
  align-self: flex-start;
  width: 20px;
  padding: 4px 0 0 7px;
`;

const TreeGlyph = styled.span`
  ${center}
  align-self: flex-start;
  width: 18px;
  height: 16px;
  margin-right: 2px;
`;

const Viewport = styled.section`
  display: flex;
  flex-direction: column;
  align-items: center;
  flex: 1;
  margin-bottom: -11px;
  padding-top: 7px;
`;

const PartDrawing = styled.svg`
  width: 100%;
  height: 538px;
`;

const ToolStrip = styled.div`
  display: flex;
  height: 28px;
  margin-right: 6px;
  border: 1px solid ${line};
`;

const Grip = styled.span`
  width: ${(props) => (props.$end ? 6 : 5)}px;
  border-left: ${(props) => (props.$end ? `1px solid ${line}` : "0")};
  background: ${tint};
`;

const ToolCell = styled.button`
  ${center}
  position: relative;
  width: 27px;
  border-left: 1px solid ${line};
  background: #fff;
`;

// small triangle that marks a drop-down tool
const Corner = styled.i`
  position: absolute;
  right: 1px;
  bottom: 3px;
  border: 2px solid #555;
  border-top-color: transparent;
  border-left-color: transparent;
`;

const StatusRow = styled.footer`
  display: flex;
  align-items: flex-end;
  height: 28px;
  padding: 0 18px 0 6px;
  border-top: 2px solid #939393;
  background: ${tint};
`;

const StatusToggle = styled.button`
  ${center}
  width: 22px;
  height: 21px;
  margin-right: 4px;
  border: 1px solid #bbb;
  border-bottom-width: 0;
  background: ${(props) => (props.$on ? "#e2e4e6" : "#fcfcfc")};
  overflow: hidden;
`;

const StatusLine = styled.span`
  width: 2px;
  height: 22px;
  margin-left: 6px;
  border-left: 1px solid ${line};
  background: #fff;
`;

const Message = styled.p`
  display: flex;
  align-items: center;
  height: 21px;
  padding-bottom: 2px;
  &::before {
    content: "";
    width: 5px;
    height: 5px;
    margin: 0 8px 0 5px;
    border-radius: 50%;
    background: #17688d;
  }
`;

const StatusRight = styled.div`
  display: flex;
  align-items: flex-end;
  margin-left: auto;
  ${StatusLine} {
    margin-left: 0;
  }
`;

const StatusCell = styled.span`
  display: flex;
  align-items: center;
  width: ${(props) => props.$width}px;
  height: 22px;
  padding-left: 3px;
  border-left: 1px solid ${line};
`;

const FindButton = styled.button`
  ${center}
  flex: none;
  width: 40px;
  height: 22px;
  border: 1px solid #b5b5b5;
  border-radius: 2px;
  background: linear-gradient(#fcfcfc, #e6e7e9);
`;

const FilterBox = styled.label`
  display: flex;
  position: relative;
  width: 154px;
  height: 21px;
  margin-left: 95px;
  border: 1px solid #b9bdc1;
  background: #fcfcfc;
  select {
    flex: 1;
    padding: 0 0 2px 7px;
    appearance: none;
  }
`;

const FilterArrow = styled.span`
  ${center}
  position: absolute;
  top: 0;
  right: 0;
  bottom: 0;
  width: 14px;
  border-left: 1px solid ${line};
  background: ${tint};
  pointer-events: none;
`;

const Edge = styled.div`
  display: flex;
  gap: 4px;
  height: 2px;
  border-top: 1px solid #555;
  background: #fff;
`;

const EdgeGap = styled.span`
  width: 102px;
`;

const EdgeSpace = styled(EdgeGap)`
  width: 42px;
`;

const EdgeMark = styled.span`
  width: 42px;
  background: #111;
`;

export default App;
